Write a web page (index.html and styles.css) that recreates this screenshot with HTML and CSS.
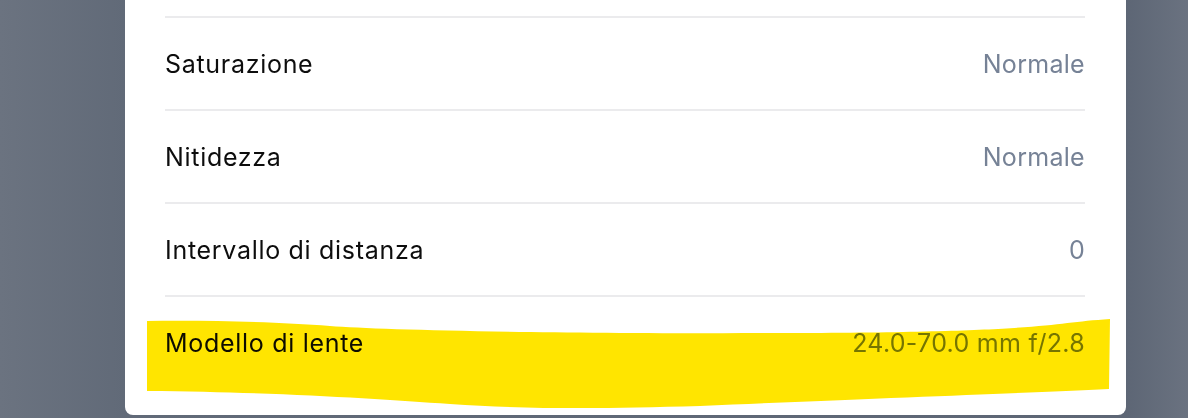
FILE: index.html
```html
<!DOCTYPE html>
<html lang="it">
<head>
    <meta charset="UTF-8">
    <meta name="viewport" content="width=device-width, initial-scale=1.0">
    <title>Dettagli foto</title>
    <link rel="stylesheet" href="styles.css">
</head>
<body>

    <div class="backdrop">
        <div class="sheet">
            <div class="info-list">
                <div class="info-row">
                    <span class="label">Saturazione</span>
                    <span class="value">Normale</span>
                </div>
                <div class="info-row">
                    <span class="label">Nitidezza</span>
                    <span class="value">Normale</span>
                </div>
                <div class="info-row">
                    <span class="label">Intervallo di distanza</span>
                    <span class="value">0</span>
                </div>
                <div class="info-row marked">
                    <span class="label">Modello di lente</span>
                    <span class="value">24.0-70.0 mm f/2.8</span>

                    <!-- evidenziatore giallo sopra la riga -->
                    <svg class="highlight" viewBox="0 0 965 95" preserveAspectRatio="none">
                        <path d="M0,4 C60,3 130,5 183,9 S400,17 653,16 S900,6 963,2 L962,72 C880,76 760,80 553,89 C450,92 380,92 303,87 C230,82 130,75 0,74 Z"/>
                    </svg>
                </div>
            </div>
        </div>
    </div>

</body>
</html>
```

FILE: styles.css
```css
html, body {
    margin: 0;
    height: 100%;
}

body {
    font-family: 'Inter', 'Noto Sans', sans-serif;
    background: linear-gradient(90deg, #6b7380 0, #616a78 125px, #5d6675 1126px, #6a7280 100%);
    overflow: hidden;
}

.backdrop {
    display: flex;
    padding: 0 62px 0 125px;
}

.sheet {
    flex: 1;
    background: #ffffff;
    border-radius: 0 0 8px 8px;
    padding: 16px 41px 27px 40px;
}

.info-list {
    display: flex;
    flex-direction: column;
}

.info-row {
    display: flex;
    justify-content: space-between;
    align-items: center;
    height: 91px;
    border-top: 2px solid #ebebed;
    font-size: 25px;
    letter-spacing: 0.7px;
    position: relative;
}

.label {
    color: #0d0d0d;
}

.value {
    color: #768296;
    letter-spacing: 0.3px;
}

.highlight {
    position: absolute;
    left: -18px;
    top: 20px;
    width: 965px;
    height: 95px;
    fill: #ffe500;
    mix-blend-mode: multiply;
    pointer-events: none;
}
```
